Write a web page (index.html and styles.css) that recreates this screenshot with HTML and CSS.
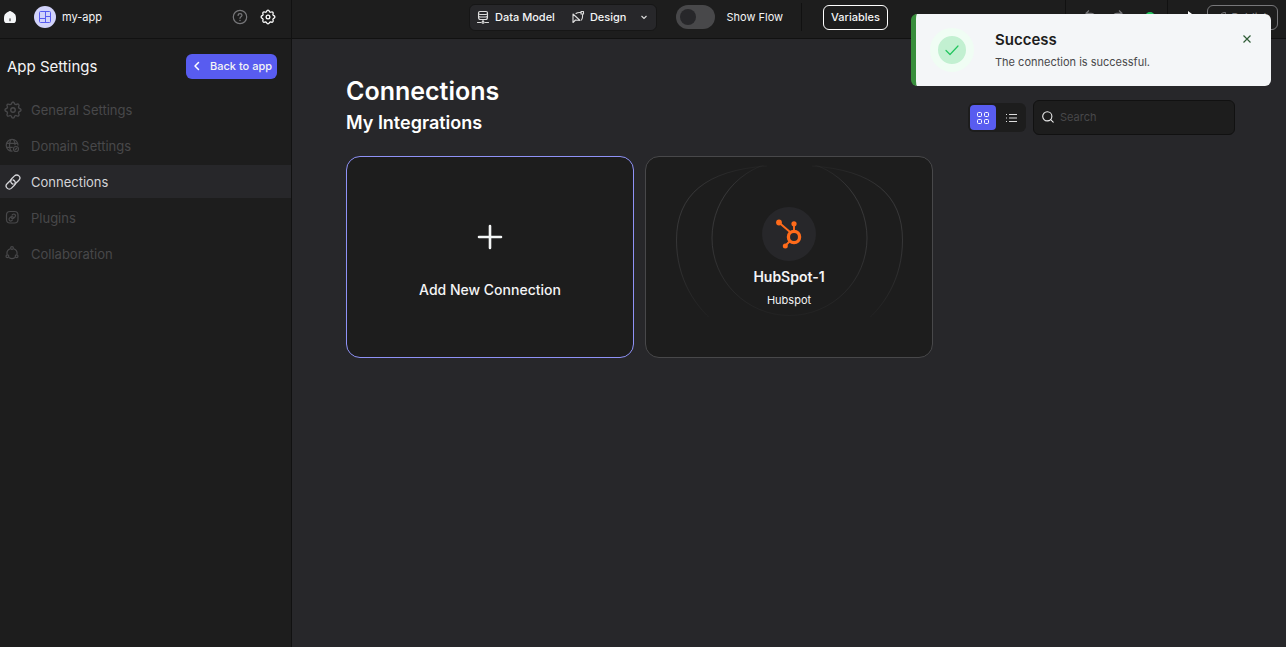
FILE: index.html
```html
<!DOCTYPE html>
<html lang="en">
<head>
<meta charset="utf-8">
<meta name="viewport" content="width=device-width, initial-scale=1">
<title>my-app – Connections</title>
<link rel="stylesheet" href="styles.css">
</head>
<body>
<div class="app">
  <header class="topbar">
    <div class="topbar-project">
      <a class="home" href="#" aria-label="Home">
        <svg width="12" height="12" viewBox="0 0 12 12"><path d="M6 0C5.200 0 1.500 2.400.900 3.300 0 4.600 0 7 0 8.200 0 11.200.800 12 3.500 12h5c2.700 0 3.500-.800 3.500-3.800 0-1.200 0-3.600-.900-4.900C10.500 2.400 6.800 0 6 0z" fill="#f4f6f8"/><path d="M6 7.800v2" stroke="#1d1d1d" stroke-width="1" stroke-linecap="round"/></svg>
      </a>
      <span class="avatar">
        <svg width="14" height="14" viewBox="0 0 14 14" fill="none" stroke="#585cf0" stroke-width="1"><rect x="1.500" y="1.500" width="11" height="11" rx="1"/><path d="M7.500 1.500v11M1.500 8.500h6M7.500 6.500h5" /></svg>
      </span>
      <span class="project-name">my-app</span>
      <button class="icon-button help" aria-label="Help">
        <svg width="16" height="16" viewBox="0 0 16 16" fill="none" stroke="#77777a" stroke-width="1.200" stroke-linecap="round"><circle cx="8" cy="8" r="6.700"/><path d="M6.100 6.400c0-2.500 3.900-2.400 3.900-.100C10 7.800 8 7.800 8 9.300"/><path d="M8 11.500v.1" stroke-width="1.500"/></svg>
      </button>
      <button class="icon-button" aria-label="Settings">
        <svg width="16" height="16" viewBox="0 0 24 24" fill="none" stroke="#fff" stroke-width="1.900" stroke-linejoin="round"><path d="M9.700 4.200Q10.400 1.800 12 1.800t2.300 2.400l1.700.7q2.200-1.200 3.300-.1t0 3.200l.7 1.700q2.400.7 2.400 2.300t-2.400 2.300l-.7 1.700q1.200 2.200 0 3.300t-3.300 0l-1.700.7q-.7 2.400-2.300 2.400t-2.300-2.400l-1.700-.7q-2.200 1.200-3.300 0t0-3.300l-.7-1.700q-2.400-.7-2.400-2.300t2.400-2.300l.7-1.700q-1.200-2.200 0-3.200t3.300.1z"/><circle cx="12" cy="12" r="2.800"/></svg>
      </button>
    </div>
    <div class="topbar-tools">
      <div class="mode">
        <button class="mode-button">
          <svg width="14" height="14" viewBox="0 0 14 14" fill="none" stroke="#ddd" stroke-width="1.100" stroke-linecap="round"><rect x="2.500" y="1.500" width="9" height="3" rx="1.500"/><path d="M2.500 3v4.500C2.500 8.800 3.200 9.500 4.500 9.500h5c1.300 0 2-.7 2-2V3M2.500 5.500C2.500 6.500 3.200 7 4.500 7h5c1.300 0 2-.5 2-1.500M7 9.500V11M1.500 12.500h3.500M9 12.500h3.500"/><circle cx="7" cy="12.300" r="1"/></svg>
          Data Model
        </button>
        <button class="mode-button">
          <svg width="14" height="14" viewBox="0 0 14 14" fill="none" stroke="#ddd" stroke-width="1.100" stroke-linejoin="round" stroke-linecap="round"><path d="M2 4v8.500l2.500-2.500 4.500.5z"/><path d="M5 3.500C7 2 8.500 2.500 10 2.500M11.500 4.500C11.500 7 12 8 10.500 10"/><rect x="10" y="1.500" width="2.500" height="2.500"/></svg>
          Design
        </button>
        <button class="icon-button" aria-label="More modes">
          <svg width="12" height="12" viewBox="0 0 12 12" fill="none" stroke="#ddd" stroke-width="1.100"><path d="m3.500 5 2.500 2.500L8.500 5"/></svg>
        </button>
      </div>
      <label class="flow"><input class="switch" type="checkbox" role="switch">Show Flow</label>
      <span class="rule"></span>
      <button class="outline-button">Variables</button>
    </div>
    <div class="topbar-actions">
      <div class="history">
        <button class="icon-button" aria-label="Undo"><svg width="14" height="14" viewBox="0 0 14 14" fill="none" stroke="#77777a" stroke-width="1.200"><path d="M6 .500 3 3.300 6 6.100M3 3.300h5a3.500 3.500 0 0 1 0 7H4"/></svg></button>
        <button class="icon-button" aria-label="Redo"><svg width="14" height="14" viewBox="0 0 14 14" fill="none" stroke="#77777a" stroke-width="1.200"><path d="m8 .500 3 2.800-3 2.800M11 3.300H6a3.500 3.500 0 0 0 0 7h4"/></svg></button>
        <span class="status"></span>
      </div>
      <button class="icon-button play" aria-label="Preview"><svg width="12" height="12" viewBox="0 0 12 12"><path d="m3 0 8 6-8 6z" fill="#fff"/></svg></button>
      <button class="outline-button publish">
        <svg width="12" height="12" viewBox="0 0 12 12" fill="none" stroke="#77777a"><path d="M4 8C4 4 6.500 1.500 10.500 1.500 10.500 5.500 8 8 4 8zM4 5H2L1 7h3M7 8v2l-2 1V8"/></svg>
        Publish
      </button>
    </div>
  </header>

  <aside class="sidebar">
    <div class="sidebar-head">
      <h2 class="sidebar-title">App Settings</h2>
      <button class="back">
        <svg width="10" height="10" viewBox="0 0 10 10" fill="none" stroke="#fff" stroke-width="1.500" stroke-linecap="round" stroke-linejoin="round"><path d="M6.500 1.500 3 5l3.500 3.500"/></svg>
        Back to app
      </button>
    </div>
    <nav class="menu">
      <a class="menu-item" href="#">
        <svg width="18" height="18" viewBox="0 0 24 24" fill="none" stroke="currentColor" stroke-width="1.800" stroke-linejoin="round"><path d="M9.700 4.200Q10.400 1.300 12 1.300t2.300 2.900l1.700.7q2.500-1.500 3.600-.4t-.3 3.500l.7 1.700q2.800.7 2.800 2.300t-2.800 2.300l-.7 1.700q1.500 2.500.3 3.600t-3.600-.3l-1.700.7q-.7 2.800-2.300 2.800t-2.300-2.800l-1.700-.7q-2.500 1.500-3.600.3t.3-3.600l-.7-1.700q-2.800-.7-2.800-2.300t2.800-2.300l.7-1.700q-1.500-2.500-.3-3.500t3.600.4z"/><circle cx="12" cy="12" r="3"/></svg>
        General Settings
      </a>
      <a class="menu-item" href="#">
        <svg width="18" height="18" viewBox="0 0 18 18" fill="none" stroke="currentColor" stroke-width="1.200"><path d="M8.500 14.200A5.900 5.900 0 1 1 14 8.500"/><path d="M7 14C5 11 5 5.800 7 2.500M9.500 2.500c1.200 2 1.700 3.800 1.600 5.700M2.700 6.300h11M2.700 10.300h6"/><circle cx="12" cy="12" r="2.500"/><path d="m11 13 2-2"/></svg>
        Domain Settings
      </a>
      <a class="menu-item active" href="#" aria-current="page">
        <svg width="18" height="18" viewBox="0 0 18 18" fill="none" stroke="currentColor" stroke-width="1.300" stroke-linecap="round"><path d="M10.800 11.300 14.900 7.300a3.100 3.100 0 0 0-4.400-4.400L7.600 5.800a3.100 3.100 0 0 0 0 4.400c.5.500.9.700 1.400.8"/><path d="M7.200 6.700 3.100 10.700a3.100 3.100 0 0 0 4.400 4.400l2.900-2.900a3.100 3.100 0 0 0 0-4.400c-.5-.5-.9-.7-1.400-.8"/></svg>
        Connections
      </a>
      <a class="menu-item" href="#">
        <svg width="18" height="18" viewBox="0 0 18 18" fill="none" stroke="currentColor" stroke-width="1.200" stroke-linecap="round"><rect x="2.500" y="2.500" width="11.500" height="11.500" rx="3.500"/><path d="M7.500 9a1.600 1.600 0 0 0 2.300 0l1.200-1.200a1.600 1.600 0 0 0-2.300-2.300l-.7.700M9 8a1.600 1.600 0 0 0-2.300 0L5.500 9.200a1.600 1.600 0 0 0 2.300 2.300l.7-.7"/></svg>
        Plugins
      </a>
      <a class="menu-item" href="#">
        <svg width="18" height="18" viewBox="0 0 18 18" fill="none" stroke="currentColor" stroke-width="1.200"><path d="M6.300 3.700A5.100 5.100 0 0 0 3.100 9.500M9.700 3.700a5.100 5.100 0 0 1 3.200 5.800M5 12.600a5.100 5.100 0 0 0 6 0"/><circle cx="8" cy="3" r="1.400"/><circle cx="3.400" cy="11.200" r="1.400"/><circle cx="12.600" cy="11.200" r="1.400"/></svg>
        Collaboration
      </a>
    </nav>
  </aside>

  <main class="content">
    <div class="content-head">
      <div class="titles">
        <h1 class="title">Connections</h1>
        <h2 class="subtitle">My Integrations</h2>
      </div>
      <div class="filters">
        <div class="view">
          <button class="view-button selected" aria-label="Grid view">
            <svg width="14" height="14" viewBox="0 0 14 14" fill="none" stroke="#fff" stroke-width="1"><rect x="1.500" y="1.500" width="4" height="4" rx="1"/><rect x="8.500" y="1.500" width="4" height="4" rx="1"/><rect x="1.500" y="8.500" width="4" height="4" rx="1"/><rect x="8.500" y="8.500" width="4" height="4" rx="1"/></svg>
          </button>
          <button class="view-button" aria-label="List view">
            <svg width="12" height="12" viewBox="0 0 12 12" stroke="#ddd" stroke-width="1.100"><path d="M4 2.500h8M4 6h8M4 9.500h8M1 2.500h1M1 6h1M1 9.500h1"/></svg>
          </button>
        </div>
        <label class="search">
          <svg width="14" height="14" viewBox="0 0 14 14" fill="none" stroke="#eee" stroke-width="1.100" stroke-linecap="round"><circle cx="6.300" cy="6.300" r="4.600"/><path d="m9.700 9.700 2.500 2.500"/></svg>
          <input class="search-input" type="text" placeholder="Search" aria-label="Search">
        </label>
      </div>
    </div>
    <div class="cards">
      <button class="card add">
        <svg width="26" height="26" viewBox="0 0 26 26" stroke="#f4f6f6" stroke-width="2.600" stroke-linecap="round"><path d="M13 2v22M2 13h22"/></svg>
        <span class="add-label">Add New Connection</span>
      </button>
      <article class="card connection">
        <svg class="orbits" width="228" height="152" viewBox="0 0 228 152" fill="none">
          <defs>
            <linearGradient id="fade" x1="0" y1="0" x2="0" y2="160" gradientUnits="userSpaceOnUse"><stop offset="0" stop-color="#4a4a4c" stop-opacity=".1"/><stop offset=".16" stop-color="#4a4a4c" stop-opacity=".6"/><stop offset=".5" stop-color="#4a4a4c" stop-opacity=".55"/><stop offset="1" stop-color="#4a4a4c" stop-opacity=".05"/></linearGradient>
          </defs>
          <circle cx="114.500" cy="73" r="77.500" stroke="url(#fade)"/>
          <path d="M92 1C31 5 1.500 30 1.500 75c0 38 18 68 44 87M137 1c61 4 90.500 29 90.500 74 0 38-18 68-44 87" stroke="url(#fade)"/>
        </svg>
        <span class="logo">
          <svg width="26" height="30" viewBox="0 0 26 30" fill="none" stroke="#ff6b1a"><circle cx="18" cy="18" r="5.600" stroke-width="3.300"/><path d="M18 12V5M14 13 3.500 4M14 22 9.500 26.500" stroke-width="1.900"/><g fill="#ff6b1a" stroke="none"><circle cx="3" cy="3.500" r="2.900"/><circle cx="18" cy="4.800" r="2.600"/><circle cx="9.300" cy="27" r="2.500"/></g></svg>
        </span>
        <h3 class="connection-name">HubSpot-1</h3>
        <p class="connection-type">Hubspot</p>
      </article>
    </div>
  </main>
</div>

<div class="toast" role="status">
  <span class="toast-mark">
    <svg width="16" height="16" viewBox="0 0 16 16" fill="none" stroke="#22c55e" stroke-width="1.200" stroke-linecap="round" stroke-linejoin="round"><path d="m2 8.500 4 4L14 4"/></svg>
  </span>
  <div class="toast-text">
    <strong class="toast-title">Success</strong>
    <p class="toast-message">The connection is successful.</p>
  </div>
  <button class="icon-button toast-close" aria-label="Close">
    <svg width="10" height="10" viewBox="0 0 10 10" stroke="#2f5c36" stroke-width="1.200"><path d="m1.500 1.500 7 7M8.500 1.500l-7 7"/></svg>
  </button>
</div>
</body>
</html>
```

FILE: styles.css
```css
* {
  box-sizing: border-box;
}

body {
  margin: 0;
  background: #27272a;
  color: #f4f4f5;
  font: 11px/16px Inter, sans-serif;
}

h1, h2, h3, p {
  margin: 0;
}

button {
  padding: 0;
  border: 0;
  background: none;
  color: inherit;
  font: inherit;
  cursor: pointer;
}

svg {
  display: block;
  flex: none;
}

.app {
  display: grid;
  grid-template-columns: 292px 1fr;
  grid-template-rows: auto 1fr;
  min-height: 100vh;
}

/* Top bar */
.topbar {
  grid-column: 1 / -1;
  display: flex;
  height: 39px;
  background: #1d1d1d;
  border-bottom: 1px solid #111;
}

.topbar-project {
  display: flex;
  align-items: center;
  width: 292px;
  padding: 0 15px 4px 4px;
  border-right: 1px solid #111;
}

.avatar {
  display: grid;
  place-items: center;
  width: 22px;
  height: 22px;
  margin: 0 6px 0 18px;
  border-radius: 50%;
  background: #d2d3fb;
}

.project-name {
  font-size: 11px;
}

.icon-button {
  display: grid;
  place-items: center;
}

.help {
  margin: 0 12px 0 auto;
}

.topbar-tools {
  display: flex;
  align-items: center;
  margin-left: 177px;
  padding-bottom: 4px;
}

.mode {
  display: flex;
  align-items: center;
  gap: 12px;
  height: 27px;
  padding: 0 6px;
  border: 1px solid #161616;
  border-radius: 6px;
  background: #27272a;
}

.mode-button {
  display: flex;
  align-items: center;
  gap: 5px;
  font-weight: 500;
}

.mode-button + .mode-button {
  margin-left: 4px;
}

.flow {
  display: flex;
  align-items: center;
  gap: 11px;
  margin-left: 19px;
}

.switch {
  appearance: none;
  width: 39px;
  height: 24px;
  margin: 0;
  padding: 4px;
  border-radius: 12px;
  background: #48484a;
}

.switch::before {
  content: "";
  display: block;
  width: 16px;
  height: 16px;
  border-radius: 50%;
  background: #27272a;
}

.switch:checked::before {
  margin-left: auto;
}

.rule {
  width: 1px;
  height: 28px;
  margin: 0 21px 0 18px;
  background: #111;
}

.outline-button {
  display: flex;
  align-items: center;
  justify-content: center;
  height: 25px;
  padding: 0 7px;
  border: 1px solid #fff;
  border-radius: 6px;
  font-weight: 500;
}

.topbar-actions {
  display: flex;
  align-items: center;
  margin-left: auto;
  padding: 0 8px 4px 0;
}

.history {
  display: flex;
  align-items: center;
  gap: 14px;
  height: 34px;
  padding: 0 12px 0 17px;
  border: solid #111;
  border-width: 0 1px;
}

.status {
  width: 10px;
  height: 10px;
  margin-left: 6px;
  border-radius: 50%;
  background: #22c55e;
}

.play {
  margin: 0 10px 0 17px;
}

.publish {
  gap: 4px;
  border-color: #77777a;
  color: #77777a;
}

/* Sidebar */
.sidebar {
  border-right: 1px solid #111;
  background: #1d1d1d;
}

.sidebar-head {
  display: flex;
  align-items: center;
  justify-content: space-between;
  padding: 15px 14px 14px 7px;
}

.sidebar-title {
  font-size: 15px;
  font-weight: 400;
}

.back {
  display: flex;
  align-items: center;
  gap: 8px;
  height: 25px;
  padding: 0 5px 2px 6px;
  border-radius: 6px;
  background: #585cf0;
  font-weight: 500;
}

.menu {
  display: grid;
  gap: 3px;
}

.menu-item {
  display: flex;
  align-items: center;
  gap: 9px;
  height: 33px;
  padding-left: 4px;
  color: #48484a;
  font-size: 13px;
  text-decoration: none;
}

.menu-item.active {
  background: #27272a;
  color: #d4d4d8;
}

/* Content */
.content {
  padding: 36px 51px 36px 54px;
}

.content-head {
  display: flex;
  align-items: flex-end;
  justify-content: space-between;
}

.title {
  color: #fff;
  font-size: 25px;
  font-weight: 600;
  line-height: 32px;
}

.subtitle {
  color: #fff;
  font-size: 18px;
  font-weight: 600;
  line-height: 32px;
}

.filters {
  display: flex;
  align-items: center;
  gap: 7px;
  padding-bottom: 4px;
}

.view {
  display: flex;
  gap: 2px;
  padding: 2px;
  border-radius: 6px;
  background: #1d1d1d;
}

.view-button {
  display: grid;
  place-items: center;
  width: 26px;
  height: 25px;
  border-radius: 4px;
}

.view-button.selected {
  background: #585cf0;
}

.search {
  display: flex;
  align-items: center;
  gap: 5px;
  width: 202px;
  height: 35px;
  padding: 0 7px 2px;
  border: 1px solid #111;
  border-radius: 6px;
  background: #1d1d1d;
}

.search-input {
  flex: 1;
  min-width: 0;
  padding: 0;
  border: 0;
  outline: 0;
  background: none;
  color: inherit;
  font: inherit;
}

.search-input::placeholder {
  color: #48484a;
}

.cards {
  display: grid;
  grid-template-columns: repeat(auto-fill, 288px);
  gap: 11px;
  margin-top: 17px;
}

.card {
  display: flex;
  flex-direction: column;
  align-items: center;
  min-height: 202px;
  border: 1px solid #48484a;
  border-radius: 14px;
  background: #1d1d1d;
}

.add {
  justify-content: center;
  gap: 32px;
  padding-top: 8px;
  border-color: #8f92f7;
}

.add-label {
  font-size: 14px;
  font-weight: 500;
}

.connection {
  position: relative;
  padding: 50px 0 20px;
}

.orbits {
  position: absolute;
  top: 8px;
  left: 50%;
  transform: translateX(-50%);
}

.logo {
  display: grid;
  place-items: center;
  width: 54px;
  height: 54px;
  border-radius: 50%;
  background: #27272a;
  z-index: 1;
}

.connection-name {
  margin: 8px 0 7px;
  font-size: 14px;
  font-weight: 600;
}

/* Toast */
.toast {
  position: fixed;
  top: 14px;
  right: 15px;
  display: flex;
  width: 360px;
  height: 72px;
  padding: 14px 18px 14px 14px;
  border-left: 5px solid #388e3c;
  border-radius: 6px;
  background: #f4f6f8;
  color: #1d1d1d;
}

.toast-mark {
  display: grid;
  place-items: center;
  width: 44px;
  height: 44px;
  margin-right: 21px;
  border: 8px solid #f0fdf4;
  border-radius: 50%;
  background: #c2f0d1;
}

.toast-text {
  display: grid;
  align-content: center;
  gap: 6px;
  padding-top: 2px;
}

.toast-title {
  font-size: 15px;
  font-weight: 600;
}

.toast-message {
  color: #48484a;
}

.toast-close {
  width: 12px;
  height: 22px;
  margin-left: auto;
}
```
